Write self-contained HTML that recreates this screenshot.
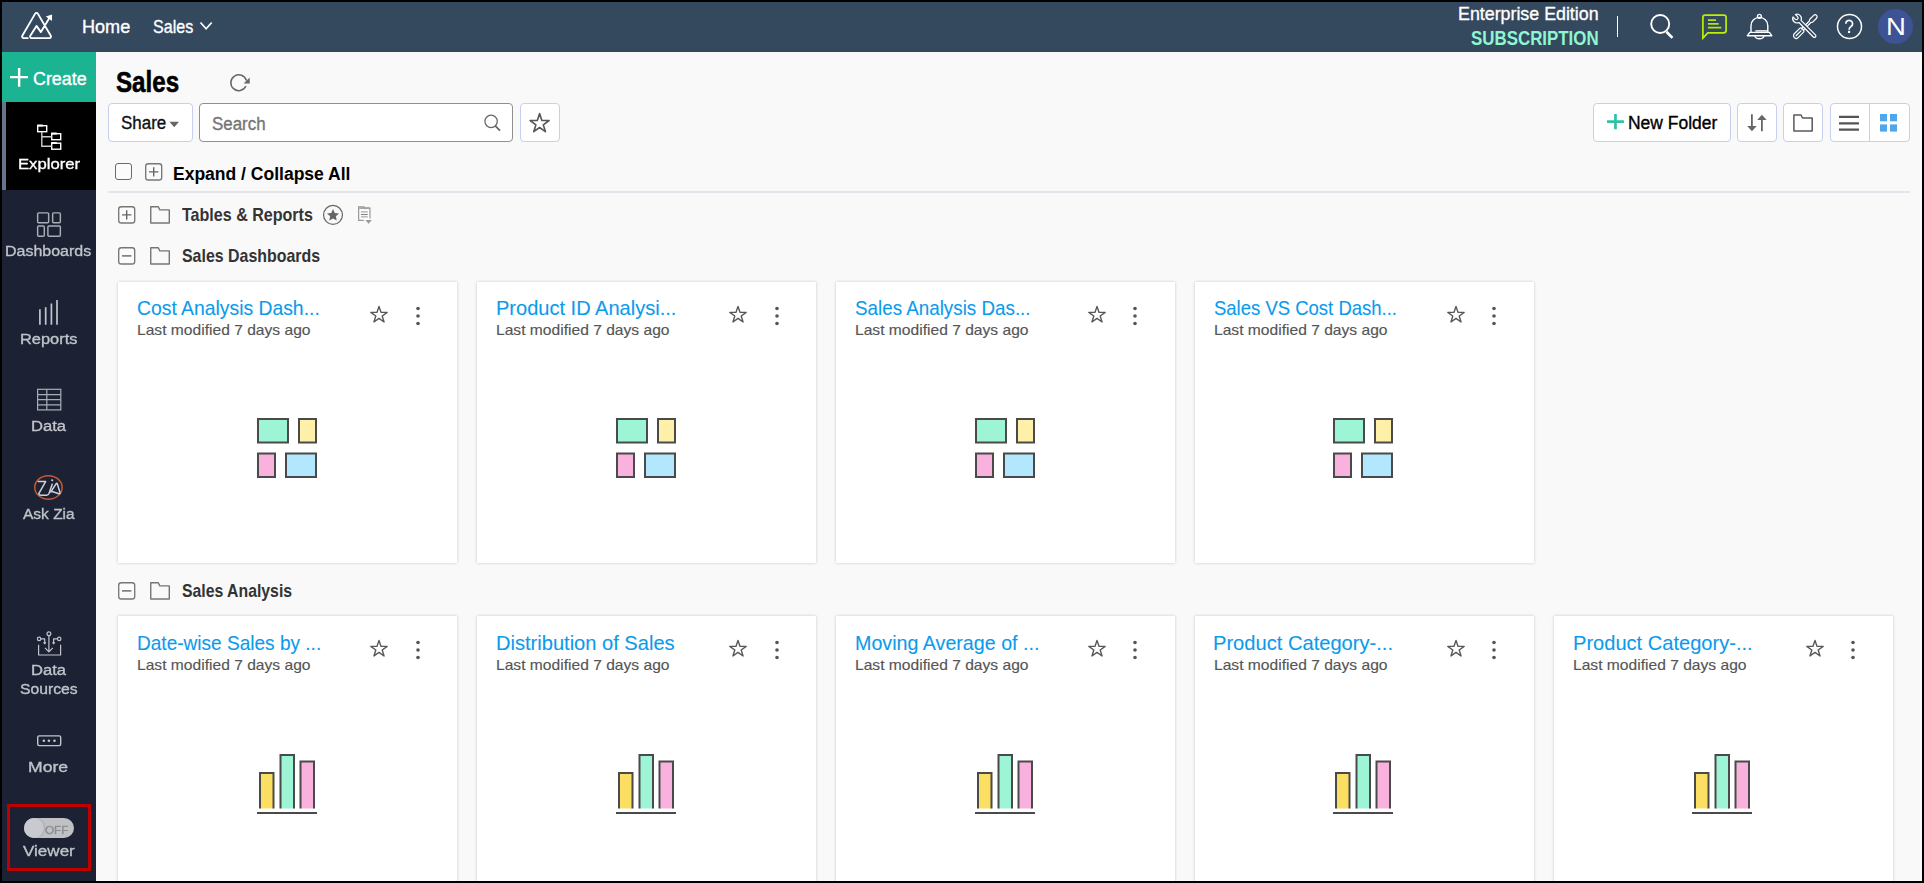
<!DOCTYPE html>
<html>
<head>
<meta charset="utf-8">
<title>Sales</title>
<style>
*{box-sizing:border-box;margin:0;padding:0}
html,body{width:1924px;height:883px;overflow:hidden;background:#f9f9f9}
body{font-family:"Liberation Sans",sans-serif;position:relative}
.abs{position:absolute}
.bd{position:absolute;background:#000;z-index:9}
#hdr{position:absolute;left:0;top:0;width:1924px;height:52px;background:#34495e}
#side{position:absolute;left:0;top:52px;width:96px;height:831px;background:#1c2234}
.t{position:absolute;white-space:nowrap;line-height:1;transform-origin:0 0;-webkit-text-stroke:.35px}
.btn{position:absolute;background:#fff;border:1px solid #c6d0ee;border-radius:4px}
.card{position:absolute;width:339px;height:281px;background:#fff;box-shadow:0 0 3px rgba(0,0,0,.2)}
</style>
</head>
<body>
<svg width="0" height="0" style="position:absolute">
<defs>
<symbol id="star" viewBox="-10 -10 20 20"><path d="M0.00 -8.60L1.97 -2.71L8.18 -2.66L3.19 1.04L5.05 6.96L0.00 3.35L-5.05 6.96L-3.19 1.04L-8.18 -2.66L-1.97 -2.71z" fill="none" stroke="#585858" stroke-width="1.400" stroke-linejoin="round"/></symbol>
<symbol id="dots" viewBox="-3 -11 6 22"><circle cx="0" cy="-7.570" r="1.800" fill="#555"/><circle cx="0" cy="0" r="1.800" fill="#555"/><circle cx="0" cy="7.570" r="1.800" fill="#555"/></symbol>
<symbol id="dash" viewBox="0 0 62 62">
<rect x="1" y="1" width="30" height="23.500" fill="#9ef5d6" stroke="#4a4a4a" stroke-width="2"/>
<rect x="42" y="1" width="17" height="23.500" fill="#fef0a8" stroke="#4a4a4a" stroke-width="2"/>
<rect x="1" y="35.500" width="17" height="23.500" fill="#f9b1de" stroke="#4a4a4a" stroke-width="2"/>
<rect x="29" y="35.500" width="30" height="23.500" fill="#b3e7fd" stroke="#4a4a4a" stroke-width="2"/>
</symbol>
<symbol id="bars" viewBox="0 0 62 62">
<path d="M3 54.500V19h13.500v35.500" fill="#fbdf63" stroke="#4a4a4a" stroke-width="2"/>
<path d="M23.500 54.500V1h13.500v53.500" fill="#9ef5d6" stroke="#4a4a4a" stroke-width="2"/>
<path d="M43.500 54.500V7.500h13.500v47" fill="#f9b1de" stroke="#4a4a4a" stroke-width="2"/>
<rect x="0" y="58" width="60" height="2" fill="#4a4a4a"/>
</symbol>
<symbol id="folder" viewBox="0 0 21 19"><path d="M.750.800H8.300L9.800 3.900H19.300V17H.750z" fill="none" stroke="#757575" stroke-width="1.400" stroke-linejoin="round"/></symbol>
<symbol id="plusb" viewBox="0 0 18 19"><rect x=".7" y=".7" width="16" height="16.300" rx="2.600" fill="#fbfbfb" stroke="#777" stroke-width="1.350"/><path d="M4 8.900h9.400M8.700 4.200v9.400" stroke="#666" stroke-width="1.400"/></symbol>
<symbol id="minusb" viewBox="0 0 18 19"><rect x=".7" y=".7" width="16" height="16.300" rx="2.600" fill="#fbfbfb" stroke="#777" stroke-width="1.350"/><path d="M4 8.900h9.400" stroke="#666" stroke-width="1.400"/></symbol>
</defs>
</svg>
<div id="main">
<div class="t" id="t_title" style="left:115.52px;top:67px;font-size:30px; font-weight:bold;-webkit-text-stroke:0;color:#000;transform:scaleX(0.8058);-webkit-text-stroke:.6px #000;">Sales</div>
<svg class="abs" style="left:226px;top:70px" width="28" height="26" viewBox="226 70 28 26"><path d="M245.910 86.040A7.900 7.900 0 1 1 246.340 80.520" fill="none" stroke="#666" stroke-width="1.500"/><path d="M249.600 77.500L249.800 83.400 243.700 83.500z" fill="#666"/></svg>
<div class="btn" style="left:108px;top:103px;width:85px;height:39px"></div>
<div class="t" id="t_share" style="left:121.25px;top:114px;font-size:18px;color:#111;transform:scaleX(0.9410);">Share</div>
<svg class="abs" style="left:169px;top:121px" width="11" height="7" viewBox="0 0 11 7"><path d="M.4.800h9.600L5.200 6.200z" fill="#666"/></svg>
<div class="btn" style="left:199px;top:103px;width:314px;height:39px;border-color:#909090"></div>
<div class="t" id="t_search" style="left:212.06px;top:115px;font-size:18px;color:#757575;transform:scaleX(0.9386);">Search</div>
<svg class="abs" style="left:482px;top:112px" width="22" height="22" viewBox="482 112 22 22"><circle cx="491.100" cy="121.350" r="6.200" fill="none" stroke="#666" stroke-width="1.250"/><path d="M495.300 125.800L500 130.700" stroke="#666" stroke-width="1.700"/></svg>
<div class="btn" style="left:520px;top:103px;width:40px;height:39px"></div>
<svg class="abs" style="left:527.800px;top:111.960px" width="23.200" height="23.200"><use href="#star"/></svg>
<div class="btn" style="left:1593px;top:103px;width:138px;height:38.500px"></div>
<svg class="abs" style="left:1605px;top:112px" width="22" height="20" viewBox="1605 112 22 20"><path d="M1615.450 114V129.200M1607 121.600h16.900" stroke="#2fc3a2" stroke-width="2.700"/></svg>
<div class="t" id="t_nf" style="left:1628.00px;top:114px;font-size:18px;color:#000;transform:scaleX(0.9702);">New Folder</div>
<div class="btn" style="left:1737px;top:103px;width:40px;height:38.500px"></div>
<svg class="abs" style="left:1744px;top:110px" width="26" height="26" viewBox="1744 110 26 26"><path d="M1751.900 114.300V127M1761.900 131.300V119" stroke="#666" stroke-width="1.800"/><path d="M1747.200 126h9.500l-4.750 5.200zM1757.200 119.900h9.400l-4.700-5.200z" fill="#666"/></svg>
<div class="btn" style="left:1783px;top:103px;width:40px;height:38.500px"></div>
<svg class="abs" style="left:1790px;top:111px" width="26" height="24" viewBox="1790 111 26 24"><path d="M1793.900 115H1801L1802.500 118H1812.200V131.100H1793.900z" fill="none" stroke="#595959" stroke-width="1.500" stroke-linejoin="round"/></svg>
<div class="btn" style="left:1830px;top:103px;width:80px;height:38.500px"></div>
<div class="abs" style="left:1869px;top:103px;width:1px;height:38px;background:#c6d0ee"></div>
<svg class="abs" style="left:1839px;top:114px" width="20" height="18" viewBox="0 0 20 18"><path d="M0 2.900h20M0 9.300h20M0 15.700h20" stroke="#555" stroke-width="2.300"/></svg>
<svg class="abs" style="left:1880px;top:114.4px" width="17" height="18" viewBox="0 0 17 18"><g fill="#50a6ea"><rect x="0" y="0" width="7" height="7.300"/><rect x="10" y="0" width="7" height="7.300"/><rect x="0" y="10.400" width="7" height="7.200"/><rect x="10" y="10.400" width="7" height="7.200"/></g></svg>
<div class="abs" style="left:115px;top:163px;width:17px;height:17px;border:1.200px solid #6a6a6a;border-radius:3px;background:#fbfbfb"></div>
<svg class="abs" style="left:145.200px;top:163px" width="18" height="19"><use href="#plusb"/></svg>
<div class="t" id="t_exp" style="left:172.71px;top:165px;font-size:18.7px; font-weight:bold;-webkit-text-stroke:0;color:#000;transform:scaleX(0.9371);">Expand / Collapse All</div>
<div class="abs" style="left:108px;top:191px;width:1802px;height:2px;background:#e2e5e9"></div>
<svg class="abs" style="left:118px;top:206px" width="18" height="19"><use href="#plusb"/></svg>
<svg class="abs" style="left:150px;top:206px" width="21" height="19"><use href="#folder"/></svg>
<div class="t" id="t_f1" style="left:182.11px;top:205px;font-size:19px; font-weight:bold;-webkit-text-stroke:0;color:#333;transform:scaleX(0.8451);">Tables &amp; Reports</div>
<svg class="abs" style="left:321px;top:203px" width="24" height="24" viewBox="321 203 24 24"><circle cx="333" cy="214.900" r="9.450" fill="none" stroke="#666" stroke-width="1.200"/><path d="M333.00 209.00L334.76 212.97L339.09 213.42L335.85 216.33L336.76 220.58L333.00 218.40L329.24 220.58L330.15 216.33L326.91 213.42L331.24 212.97z" fill="#666"/></svg>
<svg class="abs" style="left:356px;top:204px" width="18" height="22" viewBox="356 204 18 22"><rect x="359.200" y="207.300" width="10.300" height="2" fill="#aaa"/><rect x="359.300" y="209.200" width="10" height="10.600" fill="#fff"/><path d="M363.900 220.400H358.650V206.900h5.400v1.100h5.900V218.600" fill="none" stroke="#999" stroke-width="1.200"/><path d="M360.800 211.900h7M360.800 216.900h7" stroke="#aaa" stroke-width="1.200"/><path d="M360.800 214.500h7" stroke="#888" stroke-width="1.200"/><path d="M365.400 220.100h6.400l-3.200 3.700z" fill="#999"/></svg>
<svg class="abs" style="left:118px;top:247px" width="18" height="19"><use href="#minusb"/></svg>
<svg class="abs" style="left:150px;top:247px" width="21" height="19"><use href="#folder"/></svg>
<div class="t" id="t_f2" style="left:181.85px;top:246px;font-size:19px; font-weight:bold;-webkit-text-stroke:0;color:#333;transform:scaleX(0.8380);">Sales Dashboards</div>
<svg class="abs" style="left:118px;top:582px" width="18" height="19"><use href="#minusb"/></svg>
<svg class="abs" style="left:150px;top:582px" width="21" height="19"><use href="#folder"/></svg>
<div class="t" id="t_f3" style="left:181.86px;top:581px;font-size:19px; font-weight:bold;-webkit-text-stroke:0;color:#333;transform:scaleX(0.8314);">Sales Analysis</div>
<div class="card" style="left:118px;top:282px"><div class="t" id="t_ca0" style="left:19.39px;top:16px;font-size:20.3px;color:#0b9bec;transform:scaleX(0.9537);-webkit-text-stroke:.1px;">Cost Analysis Dash...</div><div class="t" id="t_sa0" style="left:19.35px;top:40px;font-size:15px;color:#555;transform:scaleX(1.0404);-webkit-text-stroke:.15px;">Last modified 7 days ago</div><svg class="abs" style="left:251px;top:23.3px" width="20" height="20"><use href="#star"/></svg><svg class="abs" style="left:296.98px;top:22.84px" width="6" height="22"><use href="#dots"/></svg><svg class="abs" style="left:139.10px;top:135.9px" width="62" height="62"><use href="#dash"/></svg></div>
<div class="card" style="left:477px;top:282px"><div class="t" id="t_ca1" style="left:18.90px;top:16px;font-size:20.3px;color:#0b9bec;transform:scaleX(0.9878);-webkit-text-stroke:.1px;">Product ID Analysi...</div><div class="t" id="t_sa1" style="left:19.35px;top:40px;font-size:15px;color:#555;transform:scaleX(1.0404);-webkit-text-stroke:.15px;">Last modified 7 days ago</div><svg class="abs" style="left:251px;top:23.3px" width="20" height="20"><use href="#star"/></svg><svg class="abs" style="left:296.65px;top:22.84px" width="6" height="22"><use href="#dots"/></svg><svg class="abs" style="left:138.85px;top:135.9px" width="62" height="62"><use href="#dash"/></svg></div>
<div class="card" style="left:836px;top:282px"><div class="t" id="t_ca2" style="left:19.37px;top:16px;font-size:20.3px;color:#0b9bec;transform:scaleX(0.9270);-webkit-text-stroke:.1px;">Sales Analysis Das...</div><div class="t" id="t_sa2" style="left:19.35px;top:40px;font-size:15px;color:#555;transform:scaleX(1.0404);-webkit-text-stroke:.15px;">Last modified 7 days ago</div><svg class="abs" style="left:251px;top:23.3px" width="20" height="20"><use href="#star"/></svg><svg class="abs" style="left:296.32px;top:22.84px" width="6" height="22"><use href="#dots"/></svg><svg class="abs" style="left:138.60px;top:135.9px" width="62" height="62"><use href="#dash"/></svg></div>
<div class="card" style="left:1195px;top:282px"><div class="t" id="t_ca3" style="left:19.09px;top:16px;font-size:20.3px;color:#0b9bec;transform:scaleX(0.9120);-webkit-text-stroke:.1px;">Sales VS Cost Dash...</div><div class="t" id="t_sa3" style="left:19.35px;top:40px;font-size:15px;color:#555;transform:scaleX(1.0404);-webkit-text-stroke:.15px;">Last modified 7 days ago</div><svg class="abs" style="left:251px;top:23.3px" width="20" height="20"><use href="#star"/></svg><svg class="abs" style="left:295.99px;top:22.84px" width="6" height="22"><use href="#dots"/></svg><svg class="abs" style="left:138.35px;top:135.9px" width="62" height="62"><use href="#dash"/></svg></div>
<div class="card" style="left:118px;top:616px"><div class="t" id="t_cb0" style="left:19.17px;top:17px;font-size:20.3px;color:#0b9bec;transform:scaleX(0.9391);-webkit-text-stroke:.1px;">Date-wise Sales by ...</div><div class="t" id="t_sb0" style="left:19.35px;top:41px;font-size:15px;color:#555;transform:scaleX(1.0404);-webkit-text-stroke:.15px;">Last modified 7 days ago</div><svg class="abs" style="left:251px;top:23.3px" width="20" height="20"><use href="#star"/></svg><svg class="abs" style="left:296.98px;top:22.84px" width="6" height="22"><use href="#dots"/></svg><svg class="abs" style="left:139.10px;top:138.1px" width="62" height="62"><use href="#bars"/></svg></div>
<div class="card" style="left:477px;top:616px"><div class="t" id="t_cb1" style="left:18.89px;top:17px;font-size:20.3px;color:#0b9bec;transform:scaleX(0.9902);-webkit-text-stroke:.1px;">Distribution of Sales</div><div class="t" id="t_sb1" style="left:19.35px;top:41px;font-size:15px;color:#555;transform:scaleX(1.0404);-webkit-text-stroke:.15px;">Last modified 7 days ago</div><svg class="abs" style="left:251px;top:23.3px" width="20" height="20"><use href="#star"/></svg><svg class="abs" style="left:296.65px;top:22.84px" width="6" height="22"><use href="#dots"/></svg><svg class="abs" style="left:138.85px;top:138.1px" width="62" height="62"><use href="#bars"/></svg></div>
<div class="card" style="left:836px;top:616px"><div class="t" id="t_cb2" style="left:18.63px;top:17px;font-size:20.3px;color:#0b9bec;transform:scaleX(0.9698);-webkit-text-stroke:.1px;">Moving Average of ...</div><div class="t" id="t_sb2" style="left:19.35px;top:41px;font-size:15px;color:#555;transform:scaleX(1.0404);-webkit-text-stroke:.15px;">Last modified 7 days ago</div><svg class="abs" style="left:251px;top:23.3px" width="20" height="20"><use href="#star"/></svg><svg class="abs" style="left:296.32px;top:22.84px" width="6" height="22"><use href="#dots"/></svg><svg class="abs" style="left:138.60px;top:138.1px" width="62" height="62"><use href="#bars"/></svg></div>
<div class="card" style="left:1195px;top:616px"><div class="t" id="t_cb3" style="left:18.49px;top:17px;font-size:20.3px;color:#0b9bec;transform:scaleX(0.9920);-webkit-text-stroke:.1px;">Product Category-...</div><div class="t" id="t_sb3" style="left:19.35px;top:41px;font-size:15px;color:#555;transform:scaleX(1.0404);-webkit-text-stroke:.15px;">Last modified 7 days ago</div><svg class="abs" style="left:251px;top:23.3px" width="20" height="20"><use href="#star"/></svg><svg class="abs" style="left:295.99px;top:22.84px" width="6" height="22"><use href="#dots"/></svg><svg class="abs" style="left:138.35px;top:138.1px" width="62" height="62"><use href="#bars"/></svg></div>
<div class="card" style="left:1554px;top:616px"><div class="t" id="t_cb4" style="left:19.29px;top:17px;font-size:20.3px;color:#0b9bec;transform:scaleX(0.9897);-webkit-text-stroke:.1px;">Product Category-...</div><div class="t" id="t_sb4" style="left:19.35px;top:41px;font-size:15px;color:#555;transform:scaleX(1.0404);-webkit-text-stroke:.15px;">Last modified 7 days ago</div><svg class="abs" style="left:251px;top:23.3px" width="20" height="20"><use href="#star"/></svg><svg class="abs" style="left:295.66px;top:22.84px" width="6" height="22"><use href="#dots"/></svg><svg class="abs" style="left:138.10px;top:138.1px" width="62" height="62"><use href="#bars"/></svg></div>
</div>
<div id="hdr">
<svg class="abs" style="left:15px;top:5px" width="45" height="40" viewBox="15 5 45 40"><path d="M27.800 38.100H23.700a1.600 1.600 0 0 1-1.400-2.400L35.200 13.600a1.500 1.500 0 0 1 2.600 0L50.800 35.700a1.600 1.600 0 0 1-1.400 2.400H31.600a1.500 1.500 0 0 1-1.300-2.300L36.500 25.900 40.900 32.100 50 17" fill="none" stroke="#fff" stroke-width="1.850" stroke-linecap="round" stroke-linejoin="round"/><path d="M45.800 16.500L52.100 14.600 51.900 21.100z" fill="#fff"/></svg>
<div class="t" id="t_home" style="left:82.25px;top:18px;font-size:18.5px;color:#fff;transform:scaleX(0.9774);">Home</div>
<div class="t" id="t_sales" style="left:153.49px;top:18px;font-size:18.5px;color:#fff;transform:scaleX(0.8689);">Sales</div>
<svg class="abs" style="left:199px;top:21px" width="14" height="10" viewBox="0 0 14 10"><path d="M1.500 1.500L7.100 7.800l5.600-6.300" fill="none" stroke="#fff" stroke-width="1.700"/></svg>
<div class="t" id="t_ent" style="left:1457.98px;top:5px;font-size:18.5px;color:#fff;transform:scaleX(0.9628);">Enterprise Edition</div>
<div class="t" id="t_sub" style="left:1470.83px;top:29px;font-size:19.5px; font-weight:bold;-webkit-text-stroke:0;color:#8ff6d2;transform:scaleX(0.8664);">SUBSCRIPTION</div>
<div class="abs" style="left:1616.800px;top:16px;width:1.400px;height:21px;background:#fff"></div>
<svg class="abs" style="left:1645px;top:10px" width="32" height="32" viewBox="1645 10 32 32"><circle cx="1660.200" cy="24" r="9" fill="none" stroke="#fff" stroke-width="1.900"/><path d="M1666.400 31.700L1672.400 37.900" stroke="#fff" stroke-width="2.700"/></svg>
<svg class="abs" style="left:1698px;top:10px" width="34" height="32" viewBox="1698 10 34 32"><path d="M1702.900 38V17.400a2.300 2.300 0 0 1 2.300-2.300h18.600a2.300 2.300 0 0 1 2.300 2.300v13.100a2.300 2.300 0 0 1-2.300 2.300h-16z" fill="none" stroke="#bdf000" stroke-width="1.700" stroke-linejoin="miter"/><path d="M1707.900 20.100h8.200M1707.900 23.900h10.800M1707.900 27.700h13.400" stroke="#b4e412" stroke-width="1.700"/></svg>
<svg class="abs" style="left:1744px;top:10px" width="32" height="32" viewBox="1744 10 32 32"><g fill="none" stroke="#fff" stroke-width="1.400" stroke-linejoin="round"><circle cx="1759.400" cy="16.300" r="1.900"/><path d="M1751 32.400V25.750a8.400 8.400 0 0 1 16.800 0V32.400"/><path d="M1749.800 32.400h19.600l2.400 3.300h-24.400z"/><path d="M1755.400 30.900h12.400"/><path d="M1755 35.700a4.500 3.100 0 0 0 9 0"/></g></svg>
<svg class="abs" style="left:1788px;top:10px" width="34" height="32" viewBox="1788 10 34 32"><g fill="none" stroke="#fff" stroke-width="1.200" stroke-linejoin="round" stroke-linecap="round"><g transform="translate(1805.200 26.700) rotate(45)"><path d="M-1.100 4V-7l-.9-1.500V-14a2 2 0 0 1 4 0v5.500L1.100-7V4" /><path d="M-1.300 3.600h2.600a1.400 1.400 0 0 1 1.400 1.400v7.700a2.700 2.700 0 0 1-5.400 0V5a1.400 1.400 0 0 1 1.400-1.400z"/><path d="M0 6v6.800"/></g><g transform="translate(1805.200 26.700) rotate(-45)"><path d="M1.500-7.400A4.400 4.400 0 0 0 1.700-15.560V-12.500A1.700 1.700 0 0 1-1.700-12.500V-15.560A4.400 4.400 0 0 0-1.500-7.400V13A1.500 1.500 0 0 0 1.500 13z" fill="#34495e"/></g></g></svg>
<svg class="abs" style="left:1834px;top:10px" width="32" height="32" viewBox="1834 10 32 32"><circle cx="1849.500" cy="26.500" r="12" fill="none" stroke="#fff" stroke-width="1.500"/><path d="M1845.800 23.700a3.400 3.300 0 1 1 5.300 2.700c-1.500 1-2 1.700-2 3.300" fill="none" stroke="#fff" stroke-width="1.700"/><rect x="1847.950" y="30.800" width="2.200" height="2.200" fill="#fff"/></svg>
<div class="abs" style="left:1878px;top:9px;width:35px;height:35px;border-radius:50%;background:#3e5296"></div>
<div class="t" id="t_n" style="left:1886.20px;top:15px;font-size:24.5px;color:#fff;transform:scaleX(1.1224);-webkit-text-stroke:0;">N</div>
</div>
<div id="side" style="top:0;height:883px;background:none">
<div class="abs" style="left:0;top:52px;width:96px;height:831px;background:#1c2234"></div>
<div class="abs" style="left:0;top:52px;width:96px;height:50px;background:#1cb392"></div>
<svg class="abs" style="left:8px;top:66px" width="22" height="23" viewBox="8 66 22 23"><path d="M19.150 68V86.800M10 77.150h17.900" stroke="#fff" stroke-width="2.400"/></svg>
<div class="t" id="t_create" style="left:32.77px;top:70px;font-size:18px;color:#fff;transform:scaleX(0.9929);">Create</div>
<div class="abs" style="left:2px;top:102px;width:94px;height:88px;background:#000;border-left:4px solid #66758a"></div>
<svg class="abs" style="left:36px;top:124px" width="27" height="27" viewBox="0 0 27 27"><g fill="none" stroke="#fff" stroke-width="1.400"><rect x="1.700" y="1.700" width="9" height="6"/><rect x="15.700" y="9.700" width="9" height="6"/><rect x="15.700" y="19.200" width="9" height="6"/><path d="M5.800 7.700v14.500h9.900M5.800 12.700h9.900" stroke="#ccc"/><path d="M1.200 1.500h5.600M15.200 9.500h5.600M15.200 19h5.600" stroke-width="1.800"/></g></svg>
<div class="t" id="t_expl" style="left:17.57px;top:156px;font-size:15.5px;color:#fff;transform:scaleX(1.0759);will-change:transform;">Explorer</div>
<svg class="abs" style="left:36px;top:212px" width="27" height="26" viewBox="0 0 27 26"><g fill="none" stroke="#a9adb5" stroke-width="1.450"><rect x="1.650" y=".850" width="11" height="9.900" rx="1"/><rect x="16.650" y=".850" width="7.700" height="9.900" rx="1"/><rect x="1.650" y="13.950" width="6.650" height="10.200" rx="1"/><rect x="11.900" y="13.950" width="12.450" height="10.200" rx="1"/></g></svg>
<div class="t" id="t_dash" style="left:5.42px;top:243px;font-size:15.5px;color:#c1c4ca;transform:scaleX(1.0308);will-change:transform;">Dashboards</div>
<svg class="abs" style="left:38px;top:299px" width="22" height="27" viewBox="0 0 22 27"><path d="M1.900 25.700V10.300M7.700 25.700V8.300M13.400 25.700V4.500M19 25.700V1" stroke="#c1c4ca" stroke-width="1.700"/></svg>
<div class="t" id="t_rep" style="left:20.29px;top:331px;font-size:15.5px;color:#c1c4ca;transform:scaleX(1.0581);will-change:transform;">Reports</div>
<svg class="abs" style="left:36px;top:388px" width="27" height="24" viewBox="0 0 27 24"><g fill="none" stroke="#a9adb5" stroke-width="1.200"><rect x="1.600" y="1.300" width="23.200" height="20.600"/><path d="M1.600 6.600h23.200M1.600 11.700h23.200M1.600 16.800h23.200M10.800 1.300v20.600"/></g></svg>
<div class="t" id="t_data" style="left:30.87px;top:418px;font-size:15.5px;color:#c1c4ca;transform:scaleX(1.0700);will-change:transform;">Data</div>
<svg class="abs" style="left:30px;top:470px" width="38" height="35" viewBox="30 470 38 35"><ellipse cx="48.450" cy="487.450" rx="13.700" ry="11.800" fill="none" stroke="#c35a32" stroke-width="1.500"/><g fill="none" stroke="#cfd1d7" stroke-width="1.500" stroke-linejoin="round" stroke-linecap="round"><path d="M38.300 481.600H45.600L38.800 493.600Q39 495.200 41 495.200H46.500Q48.300 495.200 49 493.500L52.200 484.300"/><path d="M50.800 492L56.200 483.600Q56.800 482.800 57.300 483.800L60 492.500Q60.300 494 59 493.800L51.300 491.300"/></g><circle cx="52.200" cy="480.200" r="1.050" fill="#cfd1d7"/></svg>
<div class="t" id="t_zia" style="left:22.64px;top:506px;font-size:15.5px;color:#c1c4ca;transform:scaleX(0.9984);will-change:transform;">Ask Zia</div>
<svg class="abs" style="left:36px;top:630px" width="27" height="27" viewBox="0 0 27 27"><g fill="none" stroke="#c1c4ca" stroke-width="1.200" stroke-linejoin="round"><path d="M2.600 14.700v10.300h22.000V14.700"/><path d="M12.900 6v15.500M9 17.800l3.900 4 3.900-4"/><path d="M4.900 8.900h3.800v5M21.400 8.900h-3.800v5"/><path d="M7.500 12.500l1.200 1.800 1.200-1.800zM16.400 12.500l1.200 1.800 1.200-1.800z" fill="#c1c4ca" stroke-width=".6"/><circle cx="12.900" cy="3.800" r="1.900"/><circle cx="3.100" cy="8.900" r="1.700"/><circle cx="23.200" cy="8.900" r="1.700"/></g></svg>
<div class="t" id="t_ds1" style="left:31.07px;top:662px;font-size:15.5px;color:#c1c4ca;transform:scaleX(1.0700);will-change:transform;">Data</div>
<div class="t" id="t_ds2" style="left:20.11px;top:681px;font-size:15.5px;color:#c1c4ca;transform:scaleX(1.0123);will-change:transform;">Sources</div>
<svg class="abs" style="left:36px;top:734px" width="27" height="14" viewBox="0 0 27 14"><rect x="1.700" y="1.900" width="23" height="9.700" rx="1.500" fill="none" stroke="#c1c4ca" stroke-width="1.400"/><circle cx="7.900" cy="6.800" r="1.300" fill="#c1c4ca"/><circle cx="12.900" cy="6.800" r="1.300" fill="#c1c4ca"/><circle cx="18.500" cy="6.800" r="1.300" fill="#c1c4ca"/></svg>
<div class="t" id="t_more" style="left:28.49px;top:759px;font-size:15.5px;color:#c1c4ca;transform:scaleX(1.1341);will-change:transform;">More</div>
<div class="abs" style="left:6.500px;top:803.500px;width:84.200px;height:67px;border:3px solid #c00000"></div>
<div class="abs" style="left:23.700px;top:817.700px;width:50.600px;height:20.500px;border-radius:10.250px;background:#bfc1c5"></div>
<div class="abs" style="left:23.700px;top:817.700px;width:20px;height:20.500px;border-radius:50%;background:#c8cacf;box-shadow:1px 0 1.500px rgba(0,0,0,.14)"></div>
<div class="t" id="t_off" style="left:45.34px;top:825px;font-size:11.5px;color:#8b8d93;transform:scaleX(1.0187);will-change:transform;">OFF</div>
<div class="t" id="t_viewer" style="left:22.93px;top:843px;font-size:15.5px;color:#c1c4ca;transform:scaleX(1.0995);will-change:transform;">Viewer</div>
</div>
<div class="bd" style="left:0;top:0;width:1924px;height:2px"></div><div class="bd" style="left:0;top:881px;width:1924px;height:2px"></div><div class="bd" style="left:0;top:0;width:2px;height:883px"></div><div class="bd" style="left:1922px;top:0;width:2px;height:883px"></div>
</body>
</html>
